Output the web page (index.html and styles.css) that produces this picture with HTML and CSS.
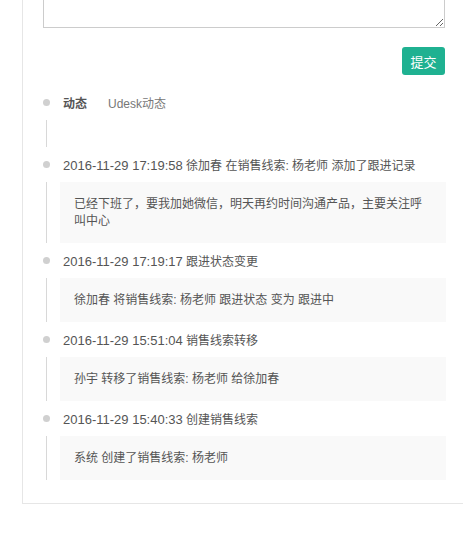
FILE: index.html
```html
<!DOCTYPE html>
<html lang="zh-CN">
<head>
    <meta charset="UTF-8">
    <meta name="viewport" content="width=device-width, initial-scale=1.0">
    <title>销售线索动态</title>
    <link rel="stylesheet" href="styles.css">
</head>
<body>
    <div class="panel">
        <div class="content">
            <textarea class="note"></textarea>
            <div class="actions">
                <button class="submit">提交</button>
            </div>

            <div class="timeline">
                <div class="item">
                    <div class="item-head">
                        <span class="dot"></span>
                        <span class="tab active">动态</span>
                        <span class="tab">Udesk动态</span>
                    </div>
                    <div class="item-body">
                        <span class="line"></span>
                        <div class="box empty"></div>
                    </div>
                </div>

                <div class="item">
                    <div class="item-head">
                        <span class="dot"></span>
                        <span><span class="time">2016-11-29 17:19:58</span> 徐加春 在销售线索: 杨老师 添加了跟进记录</span>
                    </div>
                    <div class="item-body">
                        <span class="line"></span>
                        <div class="box">已经下班了，要我加她微信，明天再约时间沟通产品，主要关注呼叫中心</div>
                    </div>
                </div>

                <div class="item">
                    <div class="item-head">
                        <span class="dot"></span>
                        <span><span class="time">2016-11-29 17:19:17</span> 跟进状态变更</span>
                    </div>
                    <div class="item-body">
                        <span class="line"></span>
                        <div class="box">徐加春 将销售线索: 杨老师 跟进状态 变为 跟进中</div>
                    </div>
                </div>

                <div class="item">
                    <div class="item-head">
                        <span class="dot"></span>
                        <span><span class="time">2016-11-29 15:51:04</span> 销售线索转移</span>
                    </div>
                    <div class="item-body">
                        <span class="line"></span>
                        <div class="box">孙宇 转移了销售线索: 杨老师 给徐加春</div>
                    </div>
                </div>

                <div class="item">
                    <div class="item-head">
                        <span class="dot"></span>
                        <span><span class="time">2016-11-29 15:40:33</span> 创建销售线索</span>
                    </div>
                    <div class="item-body">
                        <span class="line"></span>
                        <div class="box">系统 创建了销售线索: 杨老师</div>
                    </div>
                </div>
            </div>
        </div>
    </div>
</body>
</html>
```

FILE: styles.css
```css
body {
    margin: 0;
    overflow: hidden;
    background: #fff;
    font-family: "Liberation Sans", "Noto Sans CJK SC", sans-serif;
    font-size: 12px;
    color: #555;
}
.panel {
    margin: -52px -20px 0 22px;
    padding: 20px 0 23px 20px;
    border-left: 1px solid #e6e6e6;
    border-bottom: 1px solid #e6e6e6;
}
.content {
    width: 402px;
}
.note {
    display: block;
    box-sizing: border-box;
    width: 402px;
    height: 60px;
    margin: 0;
    border: 1px solid #ccc;
}
.actions {
    display: flex;
    justify-content: flex-end;
    margin-top: 19px;
}
.submit {
    width: 43px;
    height: 28px;
    padding: 0;
    border: none;
    border-radius: 3px;
    background: #1fb191;
    color: #fff;
    font-family: "Noto Sans CJK SC", sans-serif;
    font-size: 13px;
    cursor: pointer;
}
.timeline {
    margin-top: 17px;
}
.item {
    margin-bottom: 7px;
}
.item:last-child {
    margin-bottom: 0;
}
.item-head {
    display: flex;
    align-items: center;
    height: 20px;
}
.time {
    font-size: 13px;
}
.dot {
    width: 7px;
    height: 7px;
    border-radius: 50%;
    background: #d0d0d0;
    margin-right: 13px;
}
.tab {
    margin-right: 21px;
    color: #777;
}
.tab.active {
    font-weight: bold;
    color: #555;
}
.item-body {
    display: flex;
    margin-top: 8px;
}
.line {
    width: 1px;
    margin-left: 3px;
    margin-right: 13px;
    background: #d8d8d8;
}
.box {
    flex: 1;
    margin-right: -1px;
    padding: 14px 14px 13px;
    line-height: 17px;
    background: #f9f9f9;
}
.box.empty {
    height: 27px;
    padding: 0;
    background: none;
}
```
